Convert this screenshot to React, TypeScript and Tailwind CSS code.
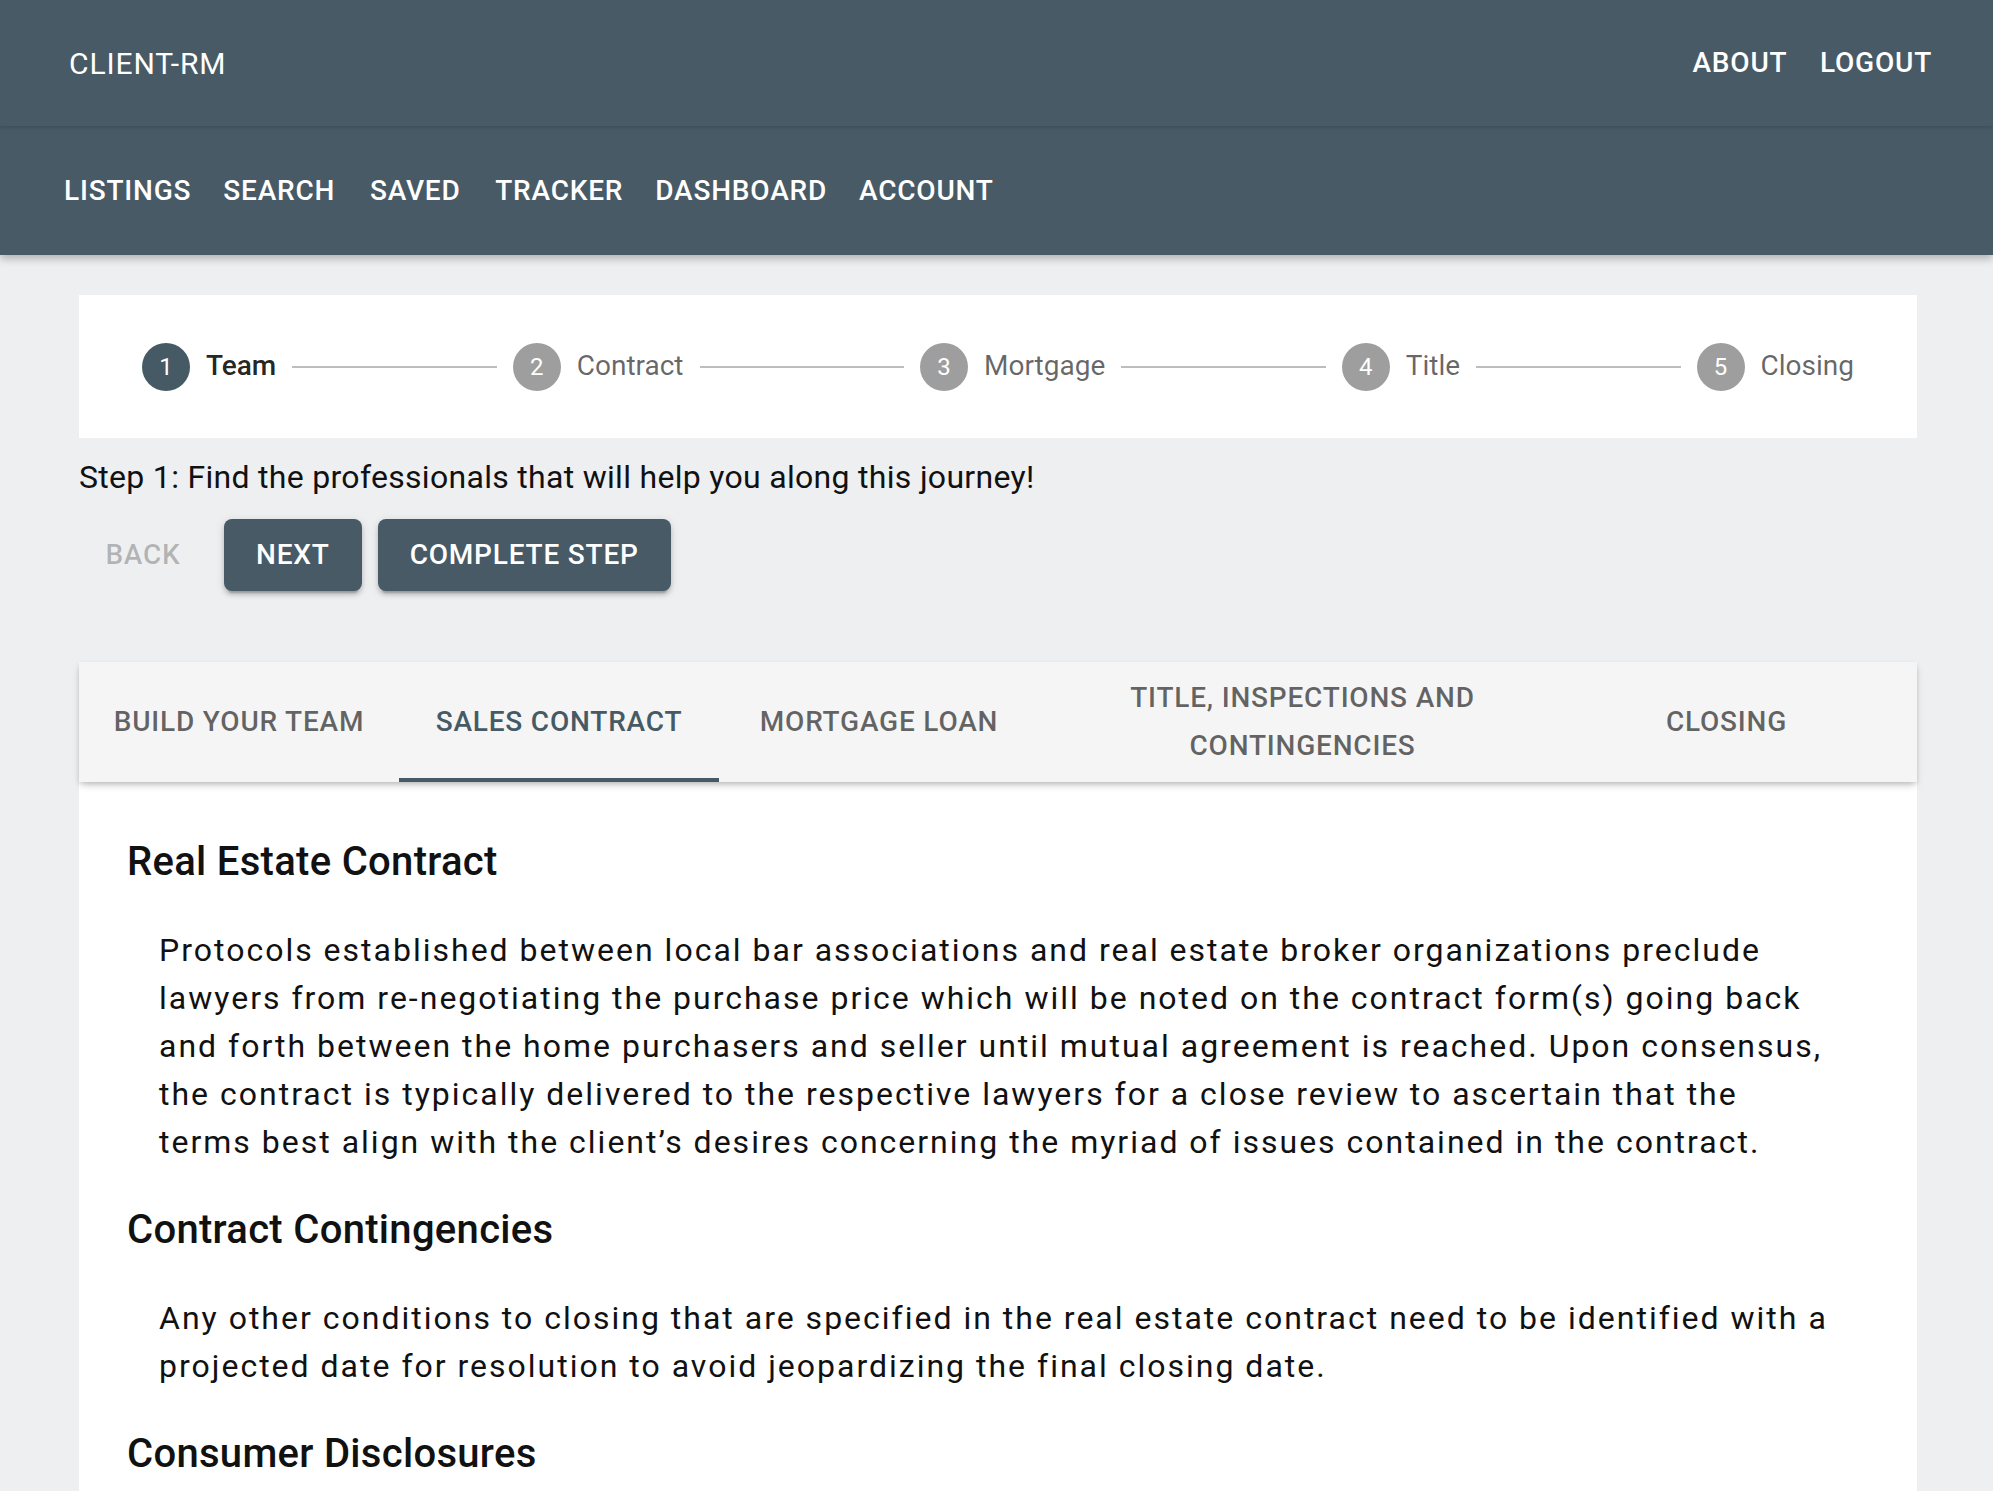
import { Fragment } from "react";

const topLinks = ["ABOUT", "LOGOUT"];
const navLinks = ["LISTINGS", "SEARCH", "SAVED", "TRACKER", "DASHBOARD", "ACCOUNT"];

const steps = ["Team", "Contract", "Mortgage", "Title", "Closing"];

const tabs = [
  { label: "BUILD YOUR TEAM", width: "w-[320px]" },
  { label: "SALES CONTRACT", width: "w-[320px]" },
  { label: "MORTGAGE LOAN", width: "w-[320px]" },
  { label: "TITLE, INSPECTIONS AND CONTINGENCIES", width: "w-[527px]" },
  { label: "CLOSING", width: "w-[321px]" },
];

const sections = [
  {
    title: "Real Estate Contract",
    lines: [
      "Protocols established between local bar associations and real estate broker organizations preclude",
      "lawyers from re-negotiating the purchase price which will be noted on the contract form(s) going back",
      "and forth between the home purchasers and seller until mutual agreement is reached. Upon consensus,",
      "the contract is typically delivered to the respective lawyers for a close review to ascertain that the",
      "terms best align with the client\u2019s desires concerning the myriad of issues contained in the contract.",
    ],
  },
  {
    title: "Contract Contingencies",
    lines: [
      "Any other conditions to closing that are specified in the real estate contract need to be identified with a",
      "projected date for resolution to avoid jeopardizing the final closing date.",
    ],
  },
  {
    title: "Consumer Disclosures",
    lines: [
      "Sellers are required to disclose known material defects and other conditions of the property to buyers.",
    ],
  },
];

function Stepper() {
  return (
    <div className="flex h-[143px] items-center bg-white px-[47px]">
      {steps.map((step, i) => (
        <Fragment key={step}>
          <div className="flex shrink-0 items-center px-[16px]">
            <span
              className={`flex h-[48px] w-[48px] items-center justify-center rounded-full text-[24px] text-white ${
                i === 0 ? "bg-[#455a64]" : "bg-[#9e9e9e]"
              }`}
            >
              {i + 1}
            </span>
            <span
              className={`pl-[16px] text-[28px] leading-[1.43] ${
                i === 0 ? "font-medium text-black/[0.87]" : "text-black/60"
              }`}
            >
              {step}
            </span>
          </div>
          {i < steps.length - 1 ? <div className="h-[2px] flex-1 bg-[#bdbdbd]" /> : null}
        </Fragment>
      ))}
    </div>
  );
}

export default function App() {
  return (
    <div className="min-h-screen bg-[#eeeff1] font-['Roboto','Liberation_Sans',sans-serif]">
      <header>
        <div className="relative z-20 flex h-[126px] items-center justify-between bg-[#475a66] pl-[69px] pr-[45px] shadow-[0_2px_3px_rgba(0,0,0,0.12)]">
          <span className="text-[30px] tracking-[0.9px] text-white">CLIENT-RM</span>
          <div className="flex">
            {topLinks.map((link) => (
              <button key={link} className="min-w-[128px] px-[16px] text-[28px] font-medium tracking-[0.8px] text-white">
                {link}
              </button>
            ))}
          </div>
        </div>
        <nav className="relative z-10 flex h-[129px] items-center bg-[#475a66] pl-[48px] shadow-[0_4px_8px_rgba(0,0,0,0.25)]">
          {navLinks.map((link) => (
            <button key={link} className="min-w-[128px] px-[16px] text-[28px] font-medium tracking-[0.8px] text-white">
              {link}
            </button>
          ))}
        </nav>
      </header>

      <main className="ml-[79px] mr-[76px] pt-[40px]">
        <Stepper />

        <p className="mt-[15px] text-[32px] leading-[48px] tracking-[0.3px] text-[#111]">
          Step 1: Find the professionals that will help you along this journey!
        </p>

        <div className="mt-[18px] flex items-center">
          <button className="h-[72px] min-w-[128px] px-[16px] text-[28px] font-medium tracking-[0.8px] text-black/25">
            BACK
          </button>
          <button className="ml-[17px] h-[72px] rounded-[8px] bg-[#475a66] px-[32px] text-[28px] font-medium tracking-[0.8px] text-white shadow-[0_6px_2px_-4px_rgba(0,0,0,0.2),0_4px_4px_0_rgba(0,0,0,0.14),0_2px_10px_0_rgba(0,0,0,0.12)]">
            NEXT
          </button>
          <button className="ml-[16px] h-[72px] rounded-[8px] bg-[#475a66] px-[32px] text-[28px] font-medium tracking-[0.8px] text-white shadow-[0_6px_2px_-4px_rgba(0,0,0,0.2),0_4px_4px_0_rgba(0,0,0,0.14),0_2px_10px_0_rgba(0,0,0,0.12)]">
            COMPLETE STEP
          </button>
        </div>

        <div className="relative z-10 mt-[71px] flex h-[120px] bg-[#f5f5f5] shadow-[0_4px_8px_-2px_rgba(0,0,0,0.25),0_2px_4px_rgba(0,0,0,0.08)]">
          {tabs.map((tab, i) => (
            <div
              key={tab.label}
              className={`relative flex items-center justify-center px-[32px] text-center text-[28px] font-medium leading-[48px] tracking-[0.8px] ${tab.width} ${
                i === 1 ? "text-[#455a64]" : "text-black/60"
              }`}
            >
              {tab.label}
              {i === 1 ? <span className="absolute inset-x-0 bottom-0 h-[4px] bg-[#455a64]" /> : null}
            </div>
          ))}
        </div>

        <section className="bg-white px-[48px] pb-[48px] pt-[48px]">
          {sections.map((section) => (
            <div key={section.title}>
              <h2 className="text-[40px] font-medium leading-[64px] tracking-[0.3px] text-[#111]">{section.title}</h2>
              <p className="mx-[32px] my-[32px] whitespace-nowrap text-[32px] leading-[48px] tracking-[2px] text-[#111]">
                {section.lines.map((line, j) => (
                  <span key={j}>
                    {line}
                    {j < section.lines.length - 1 ? <br /> : null}
                  </span>
                ))}
              </p>
            </div>
          ))}
        </section>
      </main>
    </div>
  );
}
